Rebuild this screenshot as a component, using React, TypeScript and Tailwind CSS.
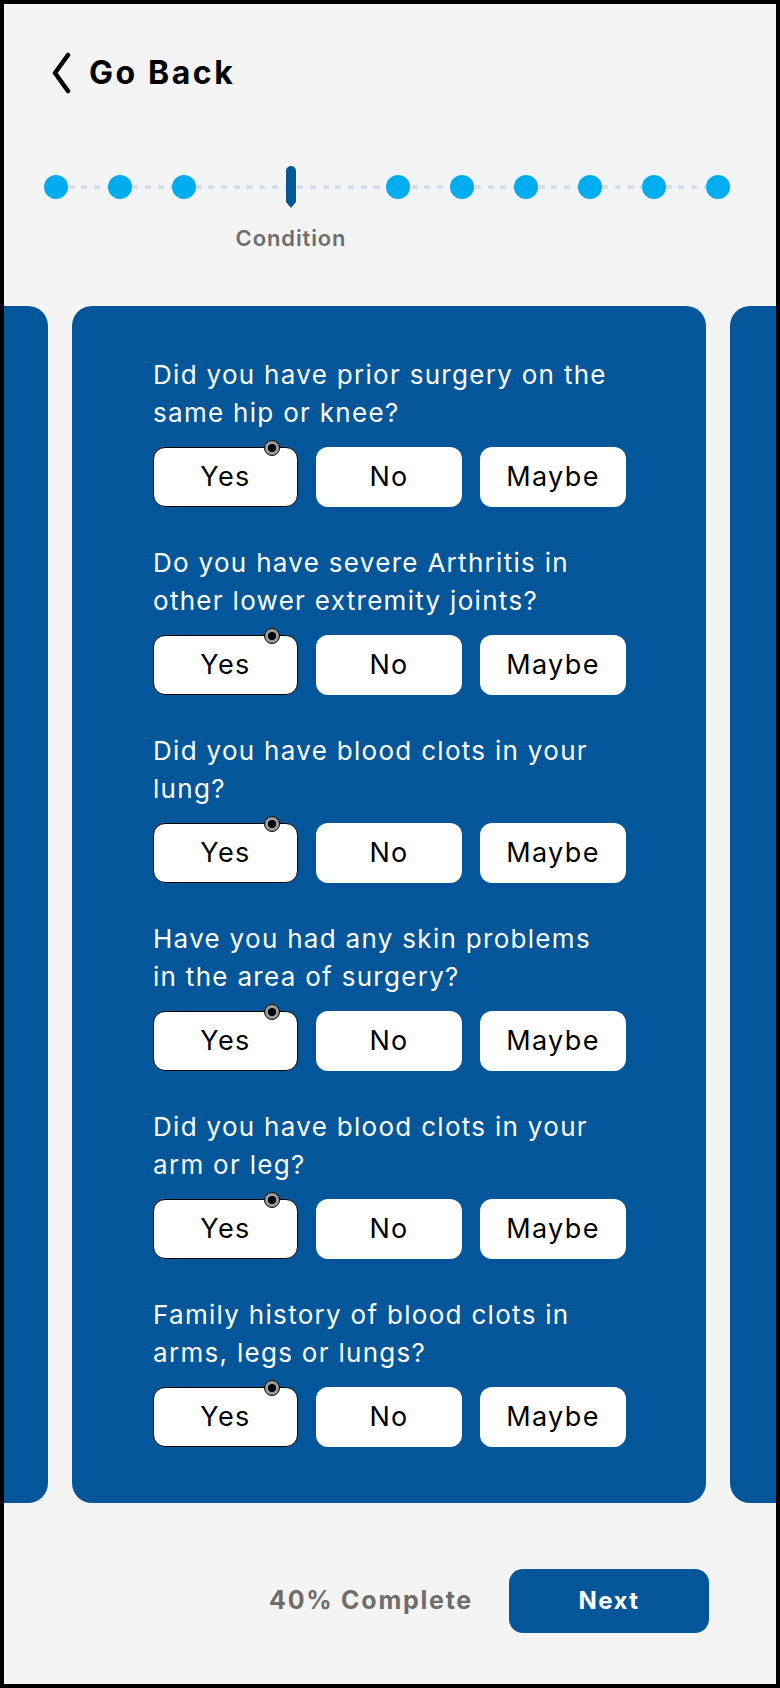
import React from 'react';

const questions: [string, string][] = [
  ['Did you have prior surgery on the', 'same hip or knee?'],
  ['Do you have severe Arthritis in', 'other lower extremity joints?'],
  ['Did you have blood clots in your', 'lung?'],
  ['Have you had any skin problems', 'in the area of surgery?'],
  ['Did you have blood clots in your', 'arm or leg?'],
  ['Family history of blood clots in', 'arms, legs or lungs?'],
];

const Dot = () => <div className="w-6 h-6 rounded-full bg-[#00adef] shrink-0 relative" />;

const QuestionBlock: React.FC<{ lines: [string, string] }> = ({ lines }) => {
  return (
    <div className="flex flex-col">
      <p className="text-[26px] leading-[38px] tracking-[0.05em] text-white">
        {lines[0]}
        <br />
        {lines[1]}
      </p>
      <div className="flex gap-[18px] mt-[15px]">
        {/* selected option */}
        <button className="relative w-[145px] h-[60px] rounded-[12px] bg-white border-[1.5px] border-black text-[27px] tracking-[0.05em] text-black">
          Yes
          <span className="absolute -top-[8px] right-[17px] w-4 h-4 rounded-full bg-[#9a9a9a] border border-black flex items-center justify-center">
            <span className="w-2 h-2 rounded-full bg-black" />
          </span>
        </button>
        <button className="w-[146px] h-[60px] rounded-[12px] bg-white text-[27px] tracking-[0.05em] text-black">No</button>
        <button className="w-[146px] h-[60px] rounded-[12px] bg-white text-[27px] tracking-[0.05em] text-black">Maybe</button>
      </div>
    </div>
  );
};

export default function App() {
  return (
    <div className="w-[780px] h-[1688px] bg-[#f4f4f4] border-4 border-black flex flex-col overflow-hidden font-['Inter',sans-serif]">
      {/* Header */}
      <div className="flex items-center pl-[46px] pt-[48px] h-[90px]">
        <svg width="22" height="42" viewBox="0 0 22 42" fill="none">
          <path d="M18 3 L5 21 L18 39" stroke="black" strokeWidth="4.5" strokeLinecap="round" strokeLinejoin="round" />
        </svg>
        <span className="ml-[17px] text-[32px] font-bold tracking-[0.08em] text-black leading-none">Go Back</span>
      </div>

      {/* Progress stepper */}
      <div className="relative flex items-center gap-10 ml-[40px] mt-[72px] h-[42px] w-[686px]">
        <div className="absolute left-[12px] right-[12px] top-1/2 -translate-y-1/2 h-1 bg-[repeating-linear-gradient(90deg,#cfdfee_0_6px,transparent_6px_12.7px)]" />
        <Dot />
        <Dot />
        <Dot />
        <div className="relative mx-[50px] shrink-0">
          <svg width="10" height="42" viewBox="0 0 10 42" className="block">
            <path d="M0 5 A5 5 0 0 1 10 5 L10 36 L5 42 L0 36 Z" fill="#03569a" />
          </svg>
          <span className="absolute top-[56px] left-1/2 -translate-x-1/2 text-[22px] font-semibold tracking-[0.04em] text-[#6e6e6e] whitespace-nowrap">
            Condition
          </span>
        </div>
        <Dot />
        <Dot />
        <Dot />
        <Dot />
        <Dot />
        <Dot />
      </div>

      {/* Card carousel */}
      <div className="flex gap-6 mt-[98px]">
        <div className="w-[44px] shrink-0 rounded-r-[20px] bg-[#03569a]" />
        <div className="w-[634px] shrink-0 rounded-[20px] bg-[#03569a] pt-[50px] pb-[56px] pl-[81px] pr-[80px] flex flex-col gap-[37px]">
          {questions.map((q, i) => (
            <QuestionBlock key={i} lines={q} />
          ))}
        </div>
        <div className="flex-1 rounded-l-[20px] bg-[#03569a]" />
      </div>

      {/* Footer */}
      <div className="flex items-center justify-end gap-9 pr-[67px] mt-[66px]">
        <span className="text-[25px] font-bold tracking-[0.07em] text-[#6d6d6d]">40% Complete</span>
        <button className="w-[200px] h-[64px] rounded-[14px] bg-[#03569a] text-white text-[24px] font-bold tracking-[0.06em]">Next</button>
      </div>
    </div>
  );
}
